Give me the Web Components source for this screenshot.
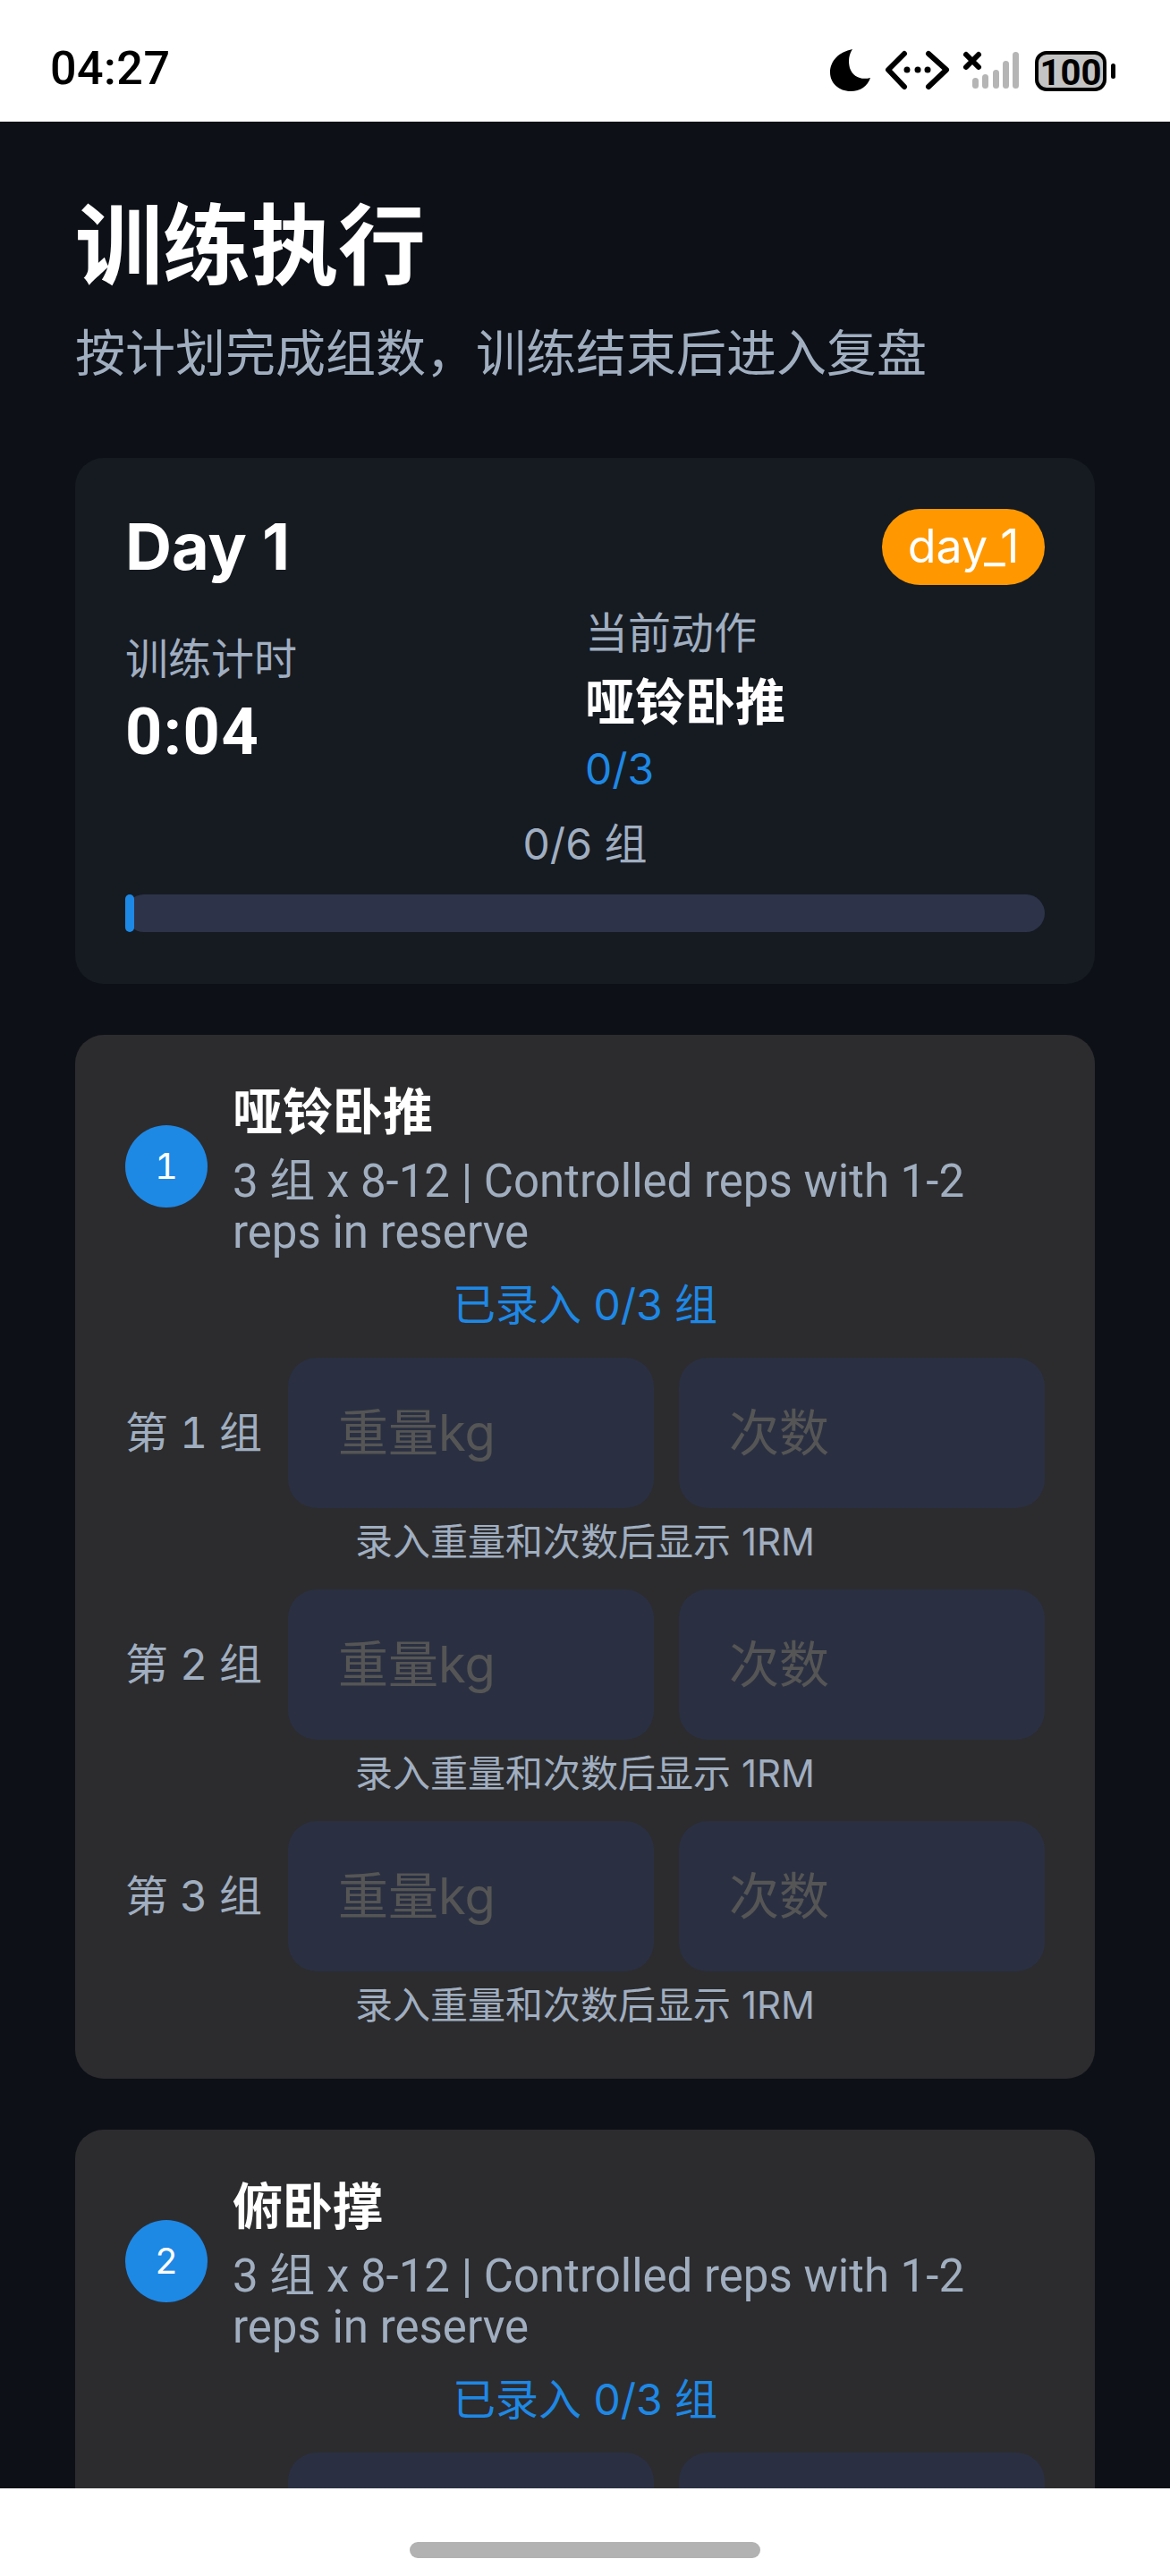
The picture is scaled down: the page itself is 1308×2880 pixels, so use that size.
<!DOCTYPE html>
<html lang="zh-CN">
<head>
<meta charset="utf-8">
<title>训练执行</title>
<style>
  html, body { margin: 0; padding: 0; background: #0d1117; }
  body { font-family: Inter, "Noto Sans CJK SC", sans-serif; }
</style>
</head>
<body>
<workout-app></workout-app>

<template id="tpl-status">
  <style>
    :host { display: flex; flex: none; height: 136px; background: #fff; align-items: center; justify-content: space-between; padding: 0 56px 0 56px; box-sizing: border-box; color: #000; }
    .time { font: 500 52px/1 Roboto, "Liberation Sans", sans-serif; letter-spacing: 0.5px; margin-top: 18px; }
    svg { display: block; margin-top: 21px; }
  </style>
  <span class="time">04:27</span>
  <svg width="326" height="50" viewBox="0 0 326 50">
    <path d="M27 1C12 4 2 14 2 27c0 12 10 21 23 21 11 0 19-6 22-15-11 3-20-2-23-11-2-8-1-15 3-21z" fill="#000"/>
    <path d="M85 6 67 24l18 19M112 6l20 18-20 19" fill="none" stroke="#000" stroke-width="6" stroke-linecap="round" stroke-linejoin="round"/>
    <circle cx="88" cy="24" r="3.5"/><circle cx="100" cy="24" r="3.5"/><circle cx="111" cy="24" r="3.5"/>
    <path d="M154 7l14 14M168 7l-14 14" stroke="#000" stroke-width="6" stroke-linecap="round"/>
    <g fill="#b5b5b5"><rect x="161" y="33" width="7" height="12" rx="3.5"/><rect x="172" y="29" width="7" height="16" rx="3.5"/><rect x="184" y="24" width="7" height="21" rx="3.5"/><rect x="195" y="14" width="7" height="31" rx="3.5"/><rect x="206" y="4" width="7" height="41" rx="3.5"/></g>
    <rect x="233" y="5" width="76" height="41" rx="11" fill="#c4c4c4" stroke="#000" stroke-width="4"/>
    <rect x="316" y="17" width="5" height="17" rx="2.5"/>
    <text x="271" y="41" text-anchor="middle" font-family="Roboto, 'Liberation Sans', sans-serif" font-weight="700" font-size="40" fill="#000">100</text>
  </svg>
</template>

<template id="tpl-header">
  <style>
    :host { display: block; padding-top: 60px; }
    h1 { margin: 0; font: 700 98px/142px "Noto Sans CJK SC", sans-serif; color: #fff; }
    p { margin: 12px 0 0; font: 400 56px/81px "Noto Sans CJK SC", sans-serif; color: #a0aec0; }
  </style>
  <h1><slot name="title"></slot></h1>
  <p><slot name="sub"></slot></p>
</template>

<template id="tpl-summary">
  <style>
    :host { display: block; margin-top: 81px; box-sizing: border-box; height: 588px; padding: 56px; background: #161b22; border-radius: 32px; color: #fff; }
    .top { display: flex; justify-content: space-between; align-items: center; height: 86px; }
    h2 { margin: 0; font: 700 72px/86px Inter, "Noto Sans CJK SC", sans-serif; }
    .pill { display: flex; align-items: center; justify-content: center; width: 182px; height: 85px; border-radius: 43px; background: #ff9800; font: 400 52px/1 Inter, sans-serif; }
    .cols { display: grid; grid-template-columns: 1fr 1fr; margin-top: 20px; }
    .col { display: flex; flex-direction: column; justify-content: center; }
    .label { font: 400 48px/60px "Noto Sans CJK SC", sans-serif; color: #a0aec0; }
    .timer { font: 700 72px/90px Roboto, sans-serif; letter-spacing: 1.5px; margin-top: 11px; }
    .move { font: 700 56px/76px "Noto Sans CJK SC", sans-serif; margin-top: 9px; }
    .count { font: 400 48px/64px Inter, sans-serif; color: #1e88e5; margin-top: 9px; }
    .sets { text-align: center; font: 400 48px/60px Inter, "Noto Sans CJK SC", sans-serif; color: #a0aec0; margin-top: 22px; }
    .track { height: 42px; margin-top: 26px; border-radius: 21px; background: #2d3348; }
    .fill { width: 10px; height: 100%; background: #1e88e5; border-radius: 5px; }
  </style>
  <div class="top"><h2>Day 1</h2><span class="pill">day_1</span></div>
  <div class="cols">
    <div class="col"><span class="label">训练计时</span><span class="timer">0:04</span></div>
    <div class="col"><span class="label">当前动作</span><span class="move">哑铃卧推</span><span class="count">0/3</span></div>
  </div>
  <div class="sets">0/6 组</div>
  <div class="track"><div class="fill"></div></div>
</template>

<template id="tpl-exercise">
  <style>
    :host { display: block; margin-top: 57px; box-sizing: border-box; padding: 44px 56px 62px; background: #2c2c2e; border-radius: 32px; color: #fff; }
    .head { display: flex; align-items: center; gap: 28px; }
    .num { flex: none; display: flex; align-items: center; justify-content: center; width: 92px; height: 92px; border-radius: 50%; background: #1e88e5; font: 400 40px/1 Inter, sans-serif; font-variant-numeric: tabular-nums; }
    h3 { margin: 0 0 15px; font: 700 56px/76px "Noto Sans CJK SC", sans-serif; }
    .desc { font: 400 51px/57px Roboto, "Noto Sans CJK SC", sans-serif; color: #a0aec0; }
    .state { margin-top: 21px; text-align: center; font: 400 48px/64px Inter, "Noto Sans CJK SC", sans-serif; color: #1e88e5; }
    .rows { display: flex; flex-direction: column; gap: 33px; margin-top: 27px; }
  </style>
  <div class="head">
    <span class="num" id="num"></span>
    <div><h3 id="name"></h3><div class="desc" id="desc"></div></div>
  </div>
  <div class="state" id="state"></div>
  <div class="rows"><slot></slot></div>
</template>

<template id="tpl-set">
  <style>
    :host { display: block; }
    .row { display: flex; align-items: center; }
    .label { flex: none; width: 182px; font: 400 48px/1 Inter, "Noto Sans CJK SC", sans-serif; font-variant-numeric: tabular-nums; color: #a0aec0; }
    .inputs { flex: 1; display: flex; gap: 28px; }
    .field { flex: 1; box-sizing: border-box; height: 168px; padding: 0 56px; display: flex; align-items: center; border-radius: 32px; background: #2a3042; font: 400 56px/1 Inter, "Noto Sans CJK SC", sans-serif; color: #555; }
    .hint { margin-top: 18px; height: 40px; text-align: center; font: 400 42px/40px Inter, "Noto Sans CJK SC", sans-serif; color: #a0aec0; }
  </style>
  <div class="row">
    <span class="label" id="label"></span>
    <div class="inputs"><div class="field">重量kg</div><div class="field">次数</div></div>
  </div>
  <div class="hint">录入重量和次数后显示 1RM</div>
</template>

<template id="tpl-nav">
  <style>
    :host { display: flex; flex: none; height: 98px; background: #fff; align-items: center; justify-content: center; padding-top: 40px; box-sizing: border-box; }
    .bar { width: 392px; height: 18px; border-radius: 9px; background: #b2b2b2; }
  </style>
  <div class="bar"></div>
</template>

<template id="tpl-app">
  <style>
    :host { display: flex; flex-direction: column; width: 1308px; height: 2880px; background: #0d1117; overflow: hidden; }
    main { flex: 1; min-height: 0; overflow: hidden; padding: 0 84px; }
  </style>
  <status-bar></status-bar>
  <main>
    <page-header><span slot="title">训练执行</span><span slot="sub">按计划完成组数，训练结束后进入复盘</span></page-header>
    <summary-card></summary-card>
    <exercise-card num="1" name="哑铃卧推">
      <set-row n="1"></set-row><set-row n="2"></set-row><set-row n="3"></set-row>
    </exercise-card>
    <exercise-card num="2" name="俯卧撑">
      <set-row n="1"></set-row><set-row n="2"></set-row><set-row n="3"></set-row>
    </exercise-card>
  </main>
  <nav-bar></nav-bar>
</template>

<script>
function mount(el, id) {
  const root = el.attachShadow({ mode: 'open' });
  root.appendChild(document.getElementById(id).content.cloneNode(true));
  return root;
}

class StatusBar extends HTMLElement { connectedCallback() { mount(this, 'tpl-status'); } }
class PageHeader extends HTMLElement { connectedCallback() { mount(this, 'tpl-header'); } }
class SummaryCard extends HTMLElement { connectedCallback() { mount(this, 'tpl-summary'); } }
class NavBar extends HTMLElement { connectedCallback() { mount(this, 'tpl-nav'); } }
class WorkoutApp extends HTMLElement { connectedCallback() { mount(this, 'tpl-app'); } }

class ExerciseCard extends HTMLElement {
  connectedCallback() {
    const root = mount(this, 'tpl-exercise');
    root.getElementById('num').textContent = this.getAttribute('num');
    root.getElementById('name').textContent = this.getAttribute('name');
    root.getElementById('desc').textContent = '3 组 x 8-12 | Controlled reps with 1-2 reps in reserve';
    root.getElementById('state').textContent = '已录入 0/3 组';
  }
}

class SetRow extends HTMLElement {
  connectedCallback() {
    const root = mount(this, 'tpl-set');
    root.getElementById('label').textContent = '第 ' + this.getAttribute('n') + ' 组';
  }
}

customElements.define('status-bar', StatusBar);
customElements.define('page-header', PageHeader);
customElements.define('summary-card', SummaryCard);
customElements.define('exercise-card', ExerciseCard);
customElements.define('set-row', SetRow);
customElements.define('nav-bar', NavBar);
customElements.define('workout-app', WorkoutApp);
</script>
</body>
</html>
